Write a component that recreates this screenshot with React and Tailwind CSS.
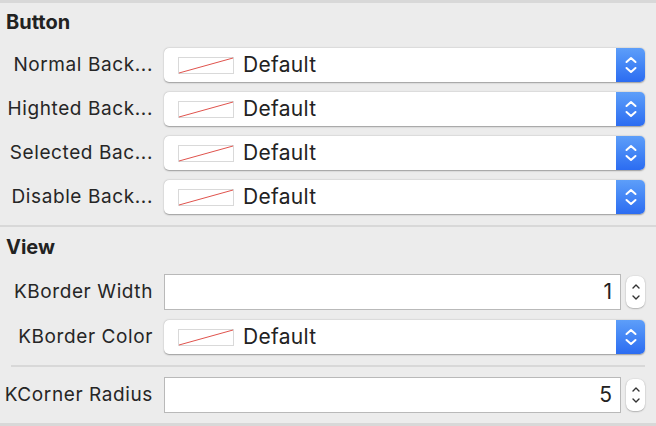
import React from 'react'

const font = { fontFamily: 'Inter, "Liberation Sans", sans-serif' }

function Swatch() {
  return (
    <svg width="56" height="17" viewBox="0 0 56 17" className="shrink-0">
      <rect x="0.5" y="0.5" width="55" height="16" fill="#fff" stroke="#d9d9d9" />
      <line x1="1" y1="16" x2="55" y2="1" stroke="#e0534d" strokeWidth="1" />
    </svg>
  )
}

function PopUp() {
  return (
    <div className="flex h-[34px] flex-1 items-stretch rounded-[5px] bg-white shadow-[0_0.5px_1.5px_rgba(0,0,0,0.35)]">
      <div className="flex flex-1 items-center gap-[9px] pl-[14px]">
        <Swatch />
        <span className="text-[21px] tracking-[0.3px] text-[#222]">Default</span>
      </div>
      <div className="flex w-[29px] items-center justify-center rounded-r-[5px] bg-gradient-to-b from-[#5d9ef9] to-[#2c6cf1]">
        <svg width="14" height="22" viewBox="0 0 14 22" fill="none" stroke="#fff" strokeWidth="2" strokeLinecap="round" strokeLinejoin="round">
          <path d="M2.5 8 L7 4 L11.5 8" />
          <path d="M2.5 14 L7 18 L11.5 14" />
        </svg>
      </div>
    </div>
  )
}

function NumberField({ value }) {
  return (
    <div className="flex flex-1 items-center gap-[5px]">
      <div className="flex h-[36px] flex-1 items-center justify-end border border-[#b9b9b9] bg-white pr-[8px] text-[21px] text-[#222]">
        {value}
      </div>
      <div className="flex h-[32px] w-[19px] flex-col items-center justify-center rounded-[7px] bg-white shadow-[0_0.5px_1.5px_rgba(0,0,0,0.4)]">
        <svg width="10" height="24" viewBox="0 0 10 24" fill="none" stroke="#333" strokeWidth="1.4" strokeLinecap="round" strokeLinejoin="round">
          <path d="M2 8 L5 5 L8 8" />
          <path d="M2 16 L5 19 L8 16" />
        </svg>
      </div>
    </div>
  )
}

function Row({ label, children }) {
  return (
    <div className="flex items-center gap-[11px] pr-[11px]">
      <div className="w-[153px] shrink-0 whitespace-nowrap text-right text-[19px] tracking-[0.6px] text-[#262626]">{label}</div>
      {children}
    </div>
  )
}

export default function App() {
  return (
    <div style={font} className="flex h-[426px] w-[656px] flex-col overflow-hidden border-y-[3px] border-[#d8d8d8] bg-[#ececec]">
      <div className="px-[6px] pt-[4px] text-[20px] font-bold text-[#222]">Button</div>
      <div className="mt-[11px] flex flex-col gap-[10px]">
        <Row label="Normal Back..."><PopUp /></Row>
        <Row label="Highted Back..."><PopUp /></Row>
        <Row label="Selected Bac..."><PopUp /></Row>
        <Row label="Disable Back..."><PopUp /></Row>
      </div>
      <div className="mt-[11px] h-[2px] bg-[#d8d8d8]" />
      <div className="px-[6px] pt-[5px] text-[20px] font-bold text-[#222]">View</div>
      <div className="mt-[12px] flex flex-col gap-[10px]">
        <Row label="KBorder Width"><NumberField value="1" /></Row>
        <Row label="KBorder Color"><PopUp /></Row>
      </div>
      <div className="mx-[11px] mt-[11px] h-[2px] bg-[#d8d8d8]" />
      <div className="mt-[10px]">
        <Row label="KCorner Radius"><NumberField value="5" /></Row>
      </div>
    </div>
  )
}
